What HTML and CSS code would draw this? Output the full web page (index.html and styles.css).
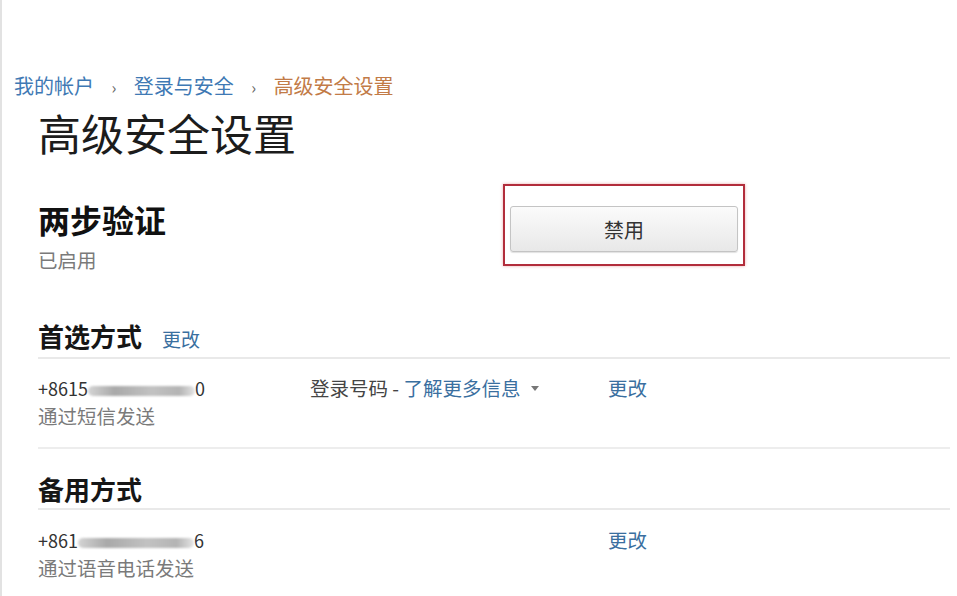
FILE: index.html
```html
<!DOCTYPE html>
<html lang="zh-CN">

<head>
  <meta charset="UTF-8">
  <meta name="viewport" content="width=device-width, initial-scale=1.0">
  <title>高级安全设置</title>
  <link rel="stylesheet" href="styles.css">
</head>

<body>
  <div class="page">
    <div class="crumbs">
      <a class="crumb">我的帐户</a>
      <span class="sep">›</span>
      <a class="crumb">登录与安全</a>
      <span class="sep">›</span>
      <span class="crumb_current">高级安全设置</span>
    </div>

    <h1 class="page_title">高级安全设置</h1>

    <div class="twostep">
      <div class="twostep_info">
        <h2 class="twostep_title">两步验证</h2>
        <div class="muted state">已启用</div>
      </div>
      <div class="highlight">
        <button class="btn_disable">禁用</button>
      </div>
    </div>

    <div class="section_head">
      <h3 class="section_title">首选方式</h3>
      <a class="link small_link">更改</a>
    </div>
    <div class="method">
      <div class="method_number">
        <div class="phone">+8615<span class="blur" style="width: 107px"></span>0</div>
        <div class="muted">通过短信发送</div>
      </div>
      <div class="method_info">
        登录号码 - <a class="link">了解更多信息</a> <span class="caret"></span>
      </div>
      <div class="method_action"><a class="link">更改</a></div>
    </div>

    <div class="section_head second">
      <h3 class="section_title">备用方式</h3>
    </div>
    <div class="method last">
      <div class="method_number">
        <div class="phone">+861<span class="blur" style="width: 116px"></span>6</div>
        <div class="muted">通过语音电话发送</div>
      </div>
      <div class="method_info"></div>
      <div class="method_action"><a class="link">更改</a></div>
    </div>
  </div>
</body>

</html>
```

FILE: styles.css
```css
body {
  margin: 0;
  min-height: 596px;
  border-left: 2px solid #e2e2e2;
  background-color: #fff;
  color: #222;
  font-family: "Noto Sans CJK SC", "Noto Sans", sans-serif;
}

.page {
  padding: 0 7px 0 36px;
}

.crumbs {
  margin-left: -24px;
  padding-top: 76px;
  font-size: 20px;
  line-height: 20px;
  white-space: nowrap;
}

.crumb {
  color: #3f79b4;
}

.sep {
  display: inline-block;
  margin: 0 13px;
  color: #666;
  font-size: 16px;
}

.crumb_current {
  color: #c27b47;
}

.page_title {
  margin: 10px 0 0;
  font-size: 43px;
  font-weight: 400;
  line-height: 50px;
  color: #1c1c1c;
}

.twostep {
  display: flex;
  align-items: flex-start;
  margin-top: 27px;
}

.twostep_info {
  flex: 0 0 465px;
  padding-top: 17px;
}

.twostep_title {
  margin: 0;
  font-size: 32px;
  font-weight: 700;
  line-height: 36px;
  color: #111;
}

.state {
  margin-top: 11px;
  line-height: 24px;
}

.muted {
  color: #7a7a7a;
  font-size: 19.5px;
}

.highlight {
  flex: 0 0 242px;
  height: 82px;
  border: 2px solid #b22d3b;
  box-shadow: 0 0 3px rgba(210, 70, 70, .45);
  padding: 20px 5px 0;
  box-sizing: border-box;
}

.btn_disable {
  display: block;
  width: 228px;
  height: 46px;
  border: 1px solid #c4c4c4;
  border-radius: 3px;
  background: linear-gradient(#fbfbfb, #e8e8e8);
  box-shadow: 0 1px 1px rgba(0, 0, 0, .12);
  font-family: inherit;
  font-size: 20px;
  color: #333;
}

.section_head {
  display: flex;
  align-items: baseline;
  gap: 20px;
  margin-top: 48px;
  padding-bottom: 5px;
  border-bottom: 2px solid #e9e9e9;
}

.section_head.second {
  margin-top: 24px;
  padding-bottom: 3px;
}

.section_title {
  margin: 0;
  font-size: 26px;
  font-weight: 700;
  line-height: 32px;
  color: #161616;
}

.link {
  color: #3a6f9f;
}

.small_link {
  font-size: 19px;
}

.method {
  display: grid;
  grid-template-columns: 272px 298px 1fr;
  padding: 15px 0 17px;
  border-bottom: 2px solid #ededed;
  font-size: 19.5px;
  line-height: 28px;
}

.method.last {
  padding-top: 16px;
  border-bottom: none;
}

.phone {
  color: #333;
  font-size: 18px;
}

.blur {
  display: inline-block;
  height: 10px;
  vertical-align: middle;
  border-radius: 5px;
  background: linear-gradient(to right, #d4d4d4, #a9a9a9 25%, #c2c2c2 60%, #b4b4b4 85%, #e4e4e4);
  filter: blur(1px);
}

.method_info {
  color: #444;
}

.caret {
  display: inline-block;
  margin-left: 6px;
  vertical-align: 5px;
  border-left: 4px solid transparent;
  border-right: 4px solid transparent;
  border-top: 5px solid #777;
}
```
